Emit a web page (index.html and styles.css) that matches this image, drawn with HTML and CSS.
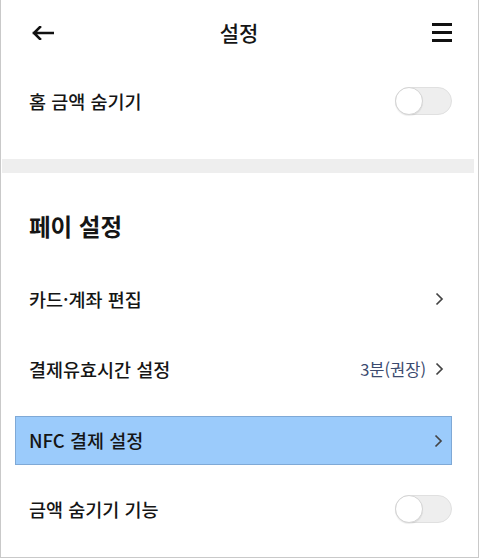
FILE: index.html
```html
<!DOCTYPE html>
<html lang="ko">
<head>
<meta charset="utf-8">
<title>설정</title>
<link rel="stylesheet" href="styles.css">
</head>
<body>
<div class="frame">
  <header class="topbar">
    <svg class="back" width="22" height="14" viewBox="0 0 22 14"><path d="M21 7H2M8 1L2 7l6 6" fill="none" stroke="#111" stroke-width="2.6" stroke-linecap="square"/></svg>
    <h1 class="title">설정</h1>
    <svg class="menu" width="20" height="19" viewBox="0 0 20 19"><path d="M0 1.5h20M0 9.5h20M0 17.5h20" stroke="#111" stroke-width="3"/></svg>
  </header>

  <div class="row toggle-row first">
    <span class="label">홈 금액 숨기기</span>
    <span class="toggle"><span class="knob"></span></span>
  </div>

  <div class="band"></div>

  <h2 class="section">페이 설정</h2>

  <div class="row">
    <span class="label">카드·계좌 편집</span>
    <svg class="chev" width="9" height="14" viewBox="0 0 9 14"><path d="M1.5 1.5L7 7l-5.5 5.5" fill="none" stroke="#444" stroke-width="1.7"/></svg>
  </div>

  <div class="row">
    <span class="label">결제유효시간 설정</span>
    <span class="right"><span class="value">3분(권장)</span><svg class="chev" width="9" height="14" viewBox="0 0 9 14"><path d="M1.5 1.5L7 7l-5.5 5.5" fill="none" stroke="#444" stroke-width="1.7"/></svg></span>
  </div>

  <div class="row hl-wrap">
    <div class="hl">
      <span class="label">NFC 결제 설정</span>
      <svg class="chev" width="9" height="14" viewBox="0 0 9 14"><path d="M1.5 1.5L7 7l-5.5 5.5" fill="none" stroke="#444" stroke-width="1.7"/></svg>
    </div>
  </div>

  <div class="row toggle-row">
    <span class="label">금액 숨기기 기능</span>
    <span class="toggle"><span class="knob"></span></span>
  </div>
</div>
</body>
</html>
```

FILE: styles.css
```css
html, body {
  margin: 0;
  padding: 0;
  background: #fff;
}
body {
  font-family: "Noto Sans CJK KR", "Noto Sans", sans-serif;
  color: #151515;
}
.frame {
  width: 479px;
  height: 558px;
  box-sizing: border-box;
  border-left: 1px solid #c9c9c9;
  border-right: 1px solid #c9c9c9;
  border-bottom: 1px solid #c9c9c9;
  overflow: hidden;
}
.topbar {
  height: 64px;
  display: flex;
  align-items: center;
  justify-content: space-between;
  padding: 0 26px 0 31px;
}
.back { display: block; margin-top: 1px; }
.menu { display: block; }
.title {
  margin: 0 0 0 -8px;
  font-size: 21px;
  font-weight: 500;
  line-height: 1;
}
.row {
  height: 70px;
  display: flex;
  align-items: center;
  justify-content: space-between;
  padding: 0 34px 0 28px;
}
.row.toggle-row {
  padding-right: 26px;
}
.row.first {
  margin-top: 2px;
}
.label {
  font-size: 18.5px;
  font-weight: 500;
  line-height: 1;
}
.toggle {
  width: 57px;
  height: 28px;
  box-sizing: border-box;
  border: 1px solid #e0e0e0;
  background: #eeeeee;
  border-radius: 14px;
  display: flex;
  align-items: center;
}
.knob {
  width: 28px;
  height: 28px;
  margin-left: -1px;
  box-sizing: border-box;
  border-radius: 50%;
  background: #fff;
  border: 1px solid #d4d4d4;
  box-shadow: 0 1px 1px rgba(0,0,0,0.08);
}
.band {
  height: 14px;
  margin: 23px 4px 0 1px;
  background: #eeeeee;
}
.section {
  margin: 0;
  padding: 38px 28px 23px;
  font-size: 23.5px;
  font-weight: 700;
  line-height: 30px;
}
.chev { display: block; }
.right {
  display: flex;
  align-items: center;
  gap: 9px;
}
.value {
  font-size: 16.5px;
  color: #3b4a6e;
  line-height: 1;
}
.row.hl-wrap {
  padding: 0 26px 0 14px;
  align-items: flex-start;
}
.hl {
  margin-top: 12px;
  height: 49px;
  flex: 1;
  box-sizing: border-box;
  background: #9bcbfb;
  border: 1px solid #7fa9d6;
  display: flex;
  align-items: center;
  justify-content: space-between;
  padding: 0 8px 0 13px;
}
```
